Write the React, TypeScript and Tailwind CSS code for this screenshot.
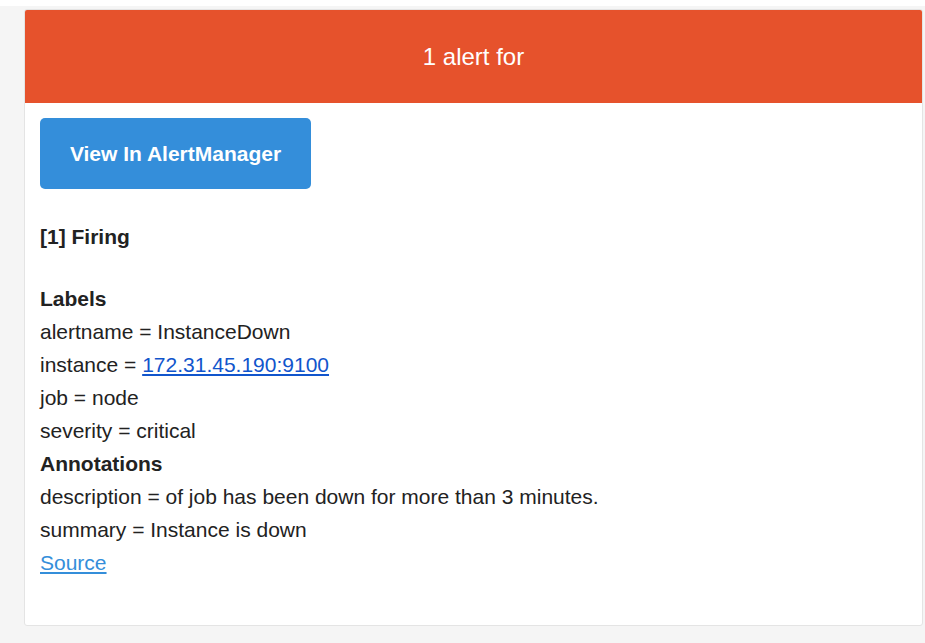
import React from "react";

export default function App() {
  return (
    <div className="bg-white pt-[6px] min-h-[643px]" style={{ fontFamily: '"Liberation Sans", Arial, sans-serif' }}>
      <div className="bg-[#f5f5f5] pl-[24px] pt-[3px] pb-[20px] min-h-[637px]">
        <div className="w-[899px] bg-white border border-[#e4e4e4] rounded-[3px] overflow-hidden">
          <div className="bg-[#e6522c] h-[93px] flex items-center justify-center text-white text-[24px]">
            1 alert for
          </div>
          <div className="px-[15px] pt-[15px] pb-[46px] text-[21px] leading-[33px] text-[#222]">
            <a className="inline-flex items-center justify-center w-[271px] h-[71px] rounded-[5px] bg-[#348eda] text-white font-bold text-[21px]">
              View In AlertManager
            </a>
            <div className="mt-[31px] font-bold">[1] Firing</div>
            <div className="mt-[29px] font-bold">Labels</div>
            <div>alertname = InstanceDown</div>
            <div>
              instance = <a className="text-[#1155cc] underline">172.31.45.190:9100</a>
            </div>
            <div>job = node</div>
            <div>severity = critical</div>
            <div className="font-bold">Annotations</div>
            <div>description = of job has been down for more than 3 minutes.</div>
            <div>summary = Instance is down</div>
            <div>
              <a className="text-[#348eda] underline">Source</a>
            </div>
          </div>
        </div>
      </div>
    </div>
  );
}
